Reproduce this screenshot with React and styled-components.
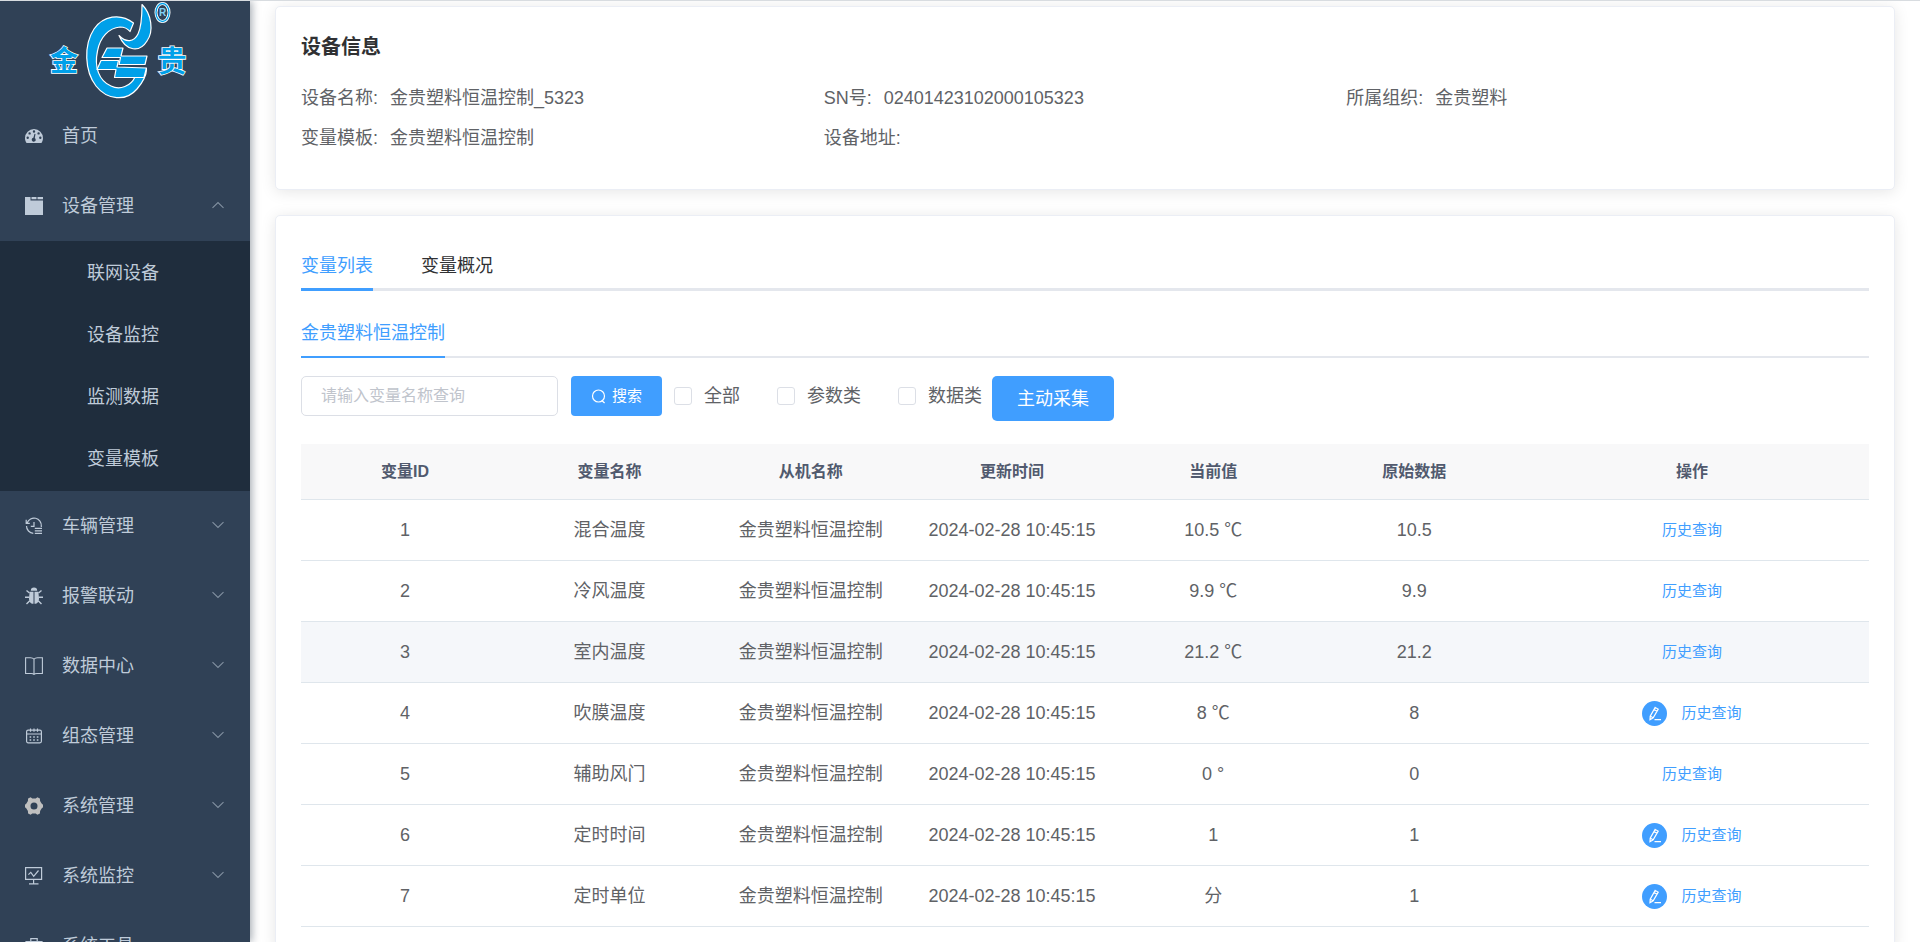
import React from "react";
import styled, { createGlobalStyle } from "styled-components";

const GlobalStyle = createGlobalStyle`
  *, *::before, *::after { box-sizing: border-box; }
  body {
    margin: 0;
    background: #fff;
    color: #606266;
    font-family: "Liberation Sans", "Noto Sans CJK SC", sans-serif;
    font-size: 18px;
    line-height: 24px;
  }
  button, input { font-family: inherit; line-height: inherit; }
  ul { list-style: none; margin: 0; padding: 0; }
`;

const Shell = styled.div`
  display: flex;
  height: 100vh;
  overflow: hidden;
  border-top: 1px solid #d8dce0;
`;

/* ---------- sidebar ---------- */

const Sidebar = styled.aside`
  flex: 0 0 250px;
  z-index: 1;
  overflow: hidden;
  background: #304156;
  box-shadow: 2px 0 8px rgba(0, 21, 41, 0.35);
`;

const LogoLink = styled.a`
  display: block;
  height: 100px;
  svg { display: block; }
`;

const itemLook = `
  display: flex;
  align-items: center;
  width: 100%;
  border: 0;
  background: none;
  color: #bfcbd9;
  font-size: 18px;
  text-align: left;
  text-decoration: none;
  cursor: pointer;
`;

const MenuLink = styled.a`
  ${itemLook}
  height: 70px;
  padding: 0 25px;
`;

const MenuButton = styled.button`
  ${itemLook}
  height: 70px;
  padding: 0 25px;
`;

const MenuIcon = styled.svg`
  flex: none;
  width: 18px;
  height: 18px;
  margin-right: 19px;
`;

const Arrow = styled.svg`
  width: 14px;
  height: 8px;
  margin-left: auto;
  margin-bottom: 2px;
  transform: ${(p) => (p.$open ? "rotate(180deg)" : "none")};
`;

const SubMenu = styled.ul`
  padding: 1px 0;
  background: #1f2d3d;
`;

const SubLink = styled.a`
  ${itemLook}
  height: 62px;
  padding-left: 87px;
`;

/* ---------- content ---------- */

const Main = styled.main`
  flex: 1;
  min-width: 0;
  display: flex;
  flex-direction: column;
  gap: 25px;
  padding: 5px 25px 25px;
`;

const Card = styled.section`
  flex: none;
  padding: 25px;
  border: 1px solid #ebeef5;
  border-radius: 5px;
  background: #fff;
  box-shadow: 0 2px 15px rgba(0, 0, 0, 0.1);
`;

const CardTitle = styled.h2`
  margin: 0 0 16px;
  color: #303133;
  font-size: 20px;
  line-height: 30px;
`;

const Details = styled.dl`
  display: grid;
  grid-template-columns: repeat(3, 1fr);
  margin: 0 0 6px;
  line-height: 40px;
`;

const Detail = styled.div`
  display: flex;
  gap: 12px;
  dd { margin: 0; }
`;

const Tabs = styled.div`
  display: flex;
  gap: 48px;
  margin-bottom: ${(p) => p.$gap}px;
  box-shadow: inset 0 -${(p) => p.$line}px 0 #e4e7ed;
`;

const Tab = styled.button`
  height: 50px;
  padding: 0;
  border: 0;
  background: none;
  color: ${(p) => (p.$active ? "#409eff" : "#303133")};
  font-size: 18px;
  box-shadow: ${(p) => (p.$active ? `inset 0 -${p.$line}px 0 #409eff` : "none")};
  cursor: pointer;
`;

const Toolbar = styled.form`
  display: flex;
  align-items: flex-start;
  margin-bottom: 23px;
`;

const SearchInput = styled.input`
  width: 257px;
  height: 40px;
  margin-right: 13px;
  padding: 0 19px;
  border: 1px solid #dcdfe6;
  border-radius: 5px;
  color: #606266;
  font-size: 16px;
  outline: none;
  &::placeholder { color: #c0c4cc; }
`;

const PrimaryButton = styled.button`
  display: flex;
  align-items: center;
  justify-content: center;
  gap: 6px;
  width: ${(p) => (p.$large ? 122 : 91)}px;
  height: ${(p) => (p.$large ? 45 : 40)}px;
  padding: 0;
  border: 0;
  border-radius: ${(p) => (p.$large ? 5 : 4)}px;
  background: #409eff;
  color: #fff;
  font-size: ${(p) => (p.$large ? 18 : 15)}px;
  cursor: pointer;
`;

const Checks = styled.div`
  display: flex;
  gap: 37px;
  margin: 0 10px 0 12px;
`;

const CheckLabel = styled.label`
  display: flex;
  align-items: center;
  gap: 12px;
  height: 40px;
`;

const CheckBox = styled.input`
  appearance: none;
  width: 18px;
  height: 18px;
  margin: 0;
  border: 1px solid #dcdfe6;
  border-radius: 3px;
  background: #fff;
  &:checked { background: #409eff; border-color: #409eff; }
`;

const Table = styled.table`
  width: 100%;
  table-layout: fixed;
  border-collapse: separate;
  border-spacing: 0;
  text-align: center;
`;

const Col = styled.col`
  width: ${(p) => p.$w || "auto"};
`;

const Th = styled.th`
  height: 56px;
  padding: 0;
  border-bottom: 1px solid #dfe6ec;
  background: #f8f8f9;
  color: #515a6e;
  font-size: 16px;
`;

const Row = styled.tr`
  background: ${(p) => (p.$hovered ? "#f5f7fa" : "#fff")};
`;

const Td = styled.td`
  height: 61px;
  padding: 0;
  border-bottom: 1px solid #dfe6ec;
`;

const Actions = styled.div`
  display: flex;
  align-items: center;
  justify-content: center;
  gap: 14px;
`;

const EditButton = styled.button`
  display: flex;
  align-items: center;
  justify-content: center;
  width: 25px;
  height: 25px;
  padding: 0;
  border: 0;
  border-radius: 50%;
  background: #409eff;
  cursor: pointer;
`;

const HistoryLink = styled.a`
  color: #409eff;
  font-size: 15px;
  text-decoration: none;
`;

/* ---------- drawings ---------- */

const Logo = () => (
  <svg width="250" height="100" viewBox="0 1 250 100" role="img" aria-label="金贵">
    <g fill="#00a0e9" stroke="#fff" strokeWidth="1.2" strokeLinejoin="round">
      <path d="M133.500 23 C120 12.500 103 16 94 29 C83.500 45 84.500 71 96 86 C107 100 126 102 137 89 C143 82 146.500 76 146.500 69 L120 69 L119 77 L135 77 C131 86 120 90.500 111 86 C99 81 94 67 97.500 51 C100 37 109 28 120 27 C125 27 128 29 130 31.500 Z" />
      <path d="M142 4.500 C151.500 14 154 31 147 41 C140 52.500 126 52 119 35.500 C126 43 134 42 138 34 C141.500 27 142 17 142 4.500 Z" />
      <path d="M107 48 L123 48 L121 56 L147 56 L145 64.500 L119 64.500 L120.500 57.500 L102 57.500 Z" />
      <path d="M101 60.500 L118.500 60.500 L117 67 L146.500 68 L144 77.500 L114.500 77.500 L116 69.500 L97 69.500 Z" />
      <ellipse cx="162.500" cy="12.500" rx="6.500" ry="9" fill="none" strokeWidth="3" />
      <ellipse cx="162.500" cy="12.500" rx="6.500" ry="9" fill="none" stroke="#00a0e9" strokeWidth="1.300" />
    </g>
    <g
      fill="#00a0e9"
      stroke="#fff"
      strokeWidth="1.600"
      paintOrder="stroke"
      fontFamily='"Noto Sans CJK SC", sans-serif'
      fontWeight="700"
      textAnchor="middle"
    >
      <text x="64" y="71" fontSize="28">金</text>
      <text x="172" y="72" fontSize="29">贵</text>
      <text
        x="162.500"
        y="16"
        fontSize="10"
        fill="#7fd0f5"
        stroke="none"
        fontFamily='"Liberation Sans", sans-serif'
      >
        R
      </text>
    </g>
  </svg>
);

const glyphs = {
  dashboard: (
    <path
      fill="currentColor"
      fillRule="evenodd"
      d="M9 2a9 9 0 0 0-9 9c0 2 .6 3.700 1.600 5h14.800c1-1.300 1.600-3 1.600-5a9 9 0 0 0-9-9zM9 3.300a1.200 1.200 0 1 1 0 2.400 1.200 1.200 0 0 1 0-2.400zM4.600 5.200a1.200 1.200 0 1 1 0 2.400 1.200 1.200 0 0 1 0-2.400zM13.600 5.200a1.200 1.200 0 1 1 0 2.400 1.200 1.200 0 0 1 0-2.400zM2.700 9.600a1.200 1.200 0 1 1 0 2.400 1.200 1.200 0 0 1 0-2.400zM15.300 9.600a1.200 1.200 0 1 1 0 2.400 1.200 1.200 0 0 1 0-2.400zM9.500 6.800l1 .3-.7 4a2 2 0 1 1-1.400-.3z"
    />
  ),
  device: (
    <g fill="currentColor">
      <path d="M0 0h5.500v3.500H18V18H0z" />
      <path d="M6.500 0h5v2.300h-5zM12.500 0H18v2.300h-5.500z" />
    </g>
  ),
  history: (
    <g fill="none" stroke="currentColor" strokeWidth="1.200">
      <path d="M2.200 5.800A7.300 7.300 0 0 1 16.300 9v1M1.500 9a7.300 7.300 0 0 0 6.800 7.300M1.200 2.800v3.600h3.600" />
      <path d="M9 5v4.300H5.800M9.800 11.300H17M9.800 13.800H17M9.800 16.300H17" />
    </g>
  ),
  bug: (
    <g fill="currentColor">
      <path d="M5.800 3.800a3.200 3.200 0 0 1 6.400 0zM4.600 4.800h3.900v12c-3 0-4.500-2.300-4.500-5.300zM13.400 4.800H9.500v12c3 0 4.500-2.300 4.500-5.300z" />
      <path
        fill="none"
        stroke="currentColor"
        strokeWidth="1.400"
        d="M1.500 3.500l3 2.500M16.500 3.500l-3 2.500M0 10.200h4.300M18 10.200h-4.300M1.500 17l3.300-3.300M16.500 17l-3.300-3.300"
      />
    </g>
  ),
  book: (
    <path
      fill="none"
      stroke="currentColor"
      strokeWidth="1.100"
      d="M9 2.200C8 1 7 .7 5.500.7H.6v15.800h5.600c1.400 0 2.300.3 2.800 1 .5-.7 1.400-1 2.800-1h5.600V.7h-4.900C11 .7 10 1 9 2.200zM9 2.200v15"
    />
  ),
  calendar: (
    <g fill="none" stroke="currentColor" strokeWidth="1.200">
      <rect x="1.600" y="3.200" width="14.800" height="12.600" rx="1.500" />
      <path d="M1.600 7h14.800M5.500 1.500v3.300M9 1.500v3.300M12.500 1.500v3.300" />
      <path strokeDasharray="1.600 2" d="M4.600 10h9M4.600 13h9" strokeWidth="1.600" />
    </g>
  ),
  gear: (
    <path
      fill="#bfbfbf"
      fillRule="evenodd"
      d="M5.600.3l1.700 1.200h3.400L12.400.3l2.500 1.300.2 2.300 1.500 2.500L18 7.700v2.600l-1.400 1.300-1.500 2.500-.2 2.300-2.500 1.300-1.700-1.200H7.300l-1.700 1.200-2.500-1.300-.2-2.300-1.500-2.500L0 10.300V7.700l1.400-1.300 1.500-2.500.2-2.300zM9 5.500a3.500 3.500 0 1 0 0 7 3.500 3.500 0 0 0 0-7z"
    />
  ),
  monitor: (
    <g fill="none" stroke="currentColor" strokeWidth="1.200">
      <path d="M.6.700h16v11.600H.6zM8.600 12.300v4M4 16.800h9.500" />
      <path d="M3.400 7.600l2.400-2.200 2.900 3.900 4.800-5.800" />
    </g>
  ),
  toolbox: (
    <g fill="none" stroke="currentColor" strokeWidth="1.200">
      <path d="M1 4.500h16v12H1zM5.800 4.500V1.700h6.400v2.800M1 9.500h6M11 9.500h6M7 8h4v3H7z" />
    </g>
  ),
};

const Icon = ({ name }) => (
  <MenuIcon viewBox="0 0 18 18" aria-hidden="true">
    {glyphs[name]}
  </MenuIcon>
);

const Chevron = ({ open }) => (
  <Arrow $open={open} viewBox="0 0 14 8" aria-hidden="true">
    <path d="M1.500 1.200L7 6.500l5.500-5.300" fill="none" stroke="#8291a1" strokeWidth="1.100" />
  </Arrow>
);

const SearchIcon = () => (
  <svg width="15" height="15" viewBox="0 0 15 15" fill="none" stroke="#fff" strokeWidth="1.200" aria-hidden="true">
    <circle cx="7.500" cy="7" r="6" />
    <path d="M10.800 11.500l2.800 2.500" />
  </svg>
);

const PencilIcon = () => (
  <svg width="15" height="15" viewBox="0 0 15 15" fill="none" stroke="#fff" strokeWidth="1.200" aria-hidden="true">
    <path d="M8.200 1.400l3 1.700-5 8.700-3.200 1.900.2-3.600zM7 3.600l3 1.700M3.400 10.200l2.700 1.500M7.500 13.600H14" />
  </svg>
);

/* ---------- data ---------- */

const menu = [
  { icon: "dashboard", label: "首页" },
  { icon: "device", label: "设备管理", children: ["联网设备", "设备监控", "监测数据", "变量模板"] },
  { icon: "history", label: "车辆管理", children: [] },
  { icon: "bug", label: "报警联动", children: [] },
  { icon: "book", label: "数据中心", children: [] },
  { icon: "calendar", label: "组态管理", children: [] },
  { icon: "gear", label: "系统管理", children: [] },
  { icon: "monitor", label: "系统监控", children: [] },
  { icon: "toolbox", label: "系统工具", children: [] },
];

const details = [
  ["设备名称:", "金贵塑料恒温控制_5323"],
  ["SN号:", "02401423102000105323"],
  ["所属组织:", "金贵塑料"],
  ["变量模板:", "金贵塑料恒温控制"],
  ["设备地址:", ""],
];

const columns = ["变量ID", "变量名称", "从机名称", "更新时间", "当前值", "原始数据", "操作"];

const rows = [
  { id: 1, name: "混合温度", value: "10.5 ℃", raw: "10.5" },
  { id: 2, name: "冷风温度", value: "9.9 ℃", raw: "9.9" },
  { id: 3, name: "室内温度", value: "21.2 ℃", raw: "21.2", hovered: true },
  { id: 4, name: "吹膜温度", value: "8 ℃", raw: "8", editable: true },
  { id: 5, name: "辅助风门", value: "0 °", raw: "0" },
  { id: 6, name: "定时时间", value: "1", raw: "1", editable: true },
  { id: 7, name: "定时单位", value: "分", raw: "1", editable: true },
];

const MenuEntry = ({ icon, label, children: items }) => {
  if (!items) {
    return (
      <li>
        <MenuLink href="#home">
          <Icon name={icon} />
          {label}
        </MenuLink>
      </li>
    );
  }
  const open = items.length > 0;
  return (
    <li>
      <MenuButton type="button" aria-expanded={open}>
        <Icon name={icon} />
        {label}
        <Chevron open={open} />
      </MenuButton>
      {open && (
        <SubMenu>
          {items.map((text) => (
            <li key={text}>
              <SubLink href="#device">{text}</SubLink>
            </li>
          ))}
        </SubMenu>
      )}
    </li>
  );
};

export default function App() {
  return (
    <>
      <GlobalStyle />
      <Shell>
        <Sidebar>
          <LogoLink href="#home">
            <Logo />
          </LogoLink>
          <nav>
            <ul>
              {menu.map((entry) => (
                <MenuEntry key={entry.label} {...entry} />
              ))}
            </ul>
          </nav>
        </Sidebar>
        <Main>
          <Card>
            <CardTitle>设备信息</CardTitle>
            <Details>
              {details.map(([term, text]) => (
                <Detail key={term}>
                  <dt>{term}</dt>
                  <dd>{text}</dd>
                </Detail>
              ))}
            </Details>
          </Card>
          <Card>
            <Tabs role="tablist" $line={3} $gap={17}>
              <Tab type="button" role="tab" aria-selected="true" $active $line={3}>变量列表</Tab>
              <Tab type="button" role="tab" aria-selected="false" $line={3}>变量概况</Tab>
            </Tabs>
            <Tabs role="tablist" $line={2} $gap={18}>
              <Tab type="button" role="tab" aria-selected="true" $active $line={2}>金贵塑料恒温控制</Tab>
            </Tabs>
            <Toolbar onSubmit={(e) => e.preventDefault()}>
              <SearchInput type="text" aria-label="变量名称" placeholder="请输入变量名称查询" />
              <PrimaryButton type="submit">
                <SearchIcon />
                搜索
              </PrimaryButton>
              <Checks>
                {["全部", "参数类", "数据类"].map((text) => (
                  <CheckLabel key={text}>
                    <CheckBox type="checkbox" />
                    {text}
                  </CheckLabel>
                ))}
              </Checks>
              <PrimaryButton type="button" $large>主动采集</PrimaryButton>
            </Toolbar>
            <Table>
              <colgroup>
                {columns.map((name, i) => (
                  <Col key={name} $w={i === 0 ? "208px" : i === 6 ? "354px" : undefined} />
                ))}
              </colgroup>
              <thead>
                <tr>
                  {columns.map((name) => (
                    <Th key={name} scope="col">{name}</Th>
                  ))}
                </tr>
              </thead>
              <tbody>
                {rows.map((row) => (
                  <Row key={row.id} $hovered={row.hovered}>
                    <Td>{row.id}</Td>
                    <Td>{row.name}</Td>
                    <Td>金贵塑料恒温控制</Td>
                    <Td>2024-02-28 10:45:15</Td>
                    <Td>{row.value}</Td>
                    <Td>{row.raw}</Td>
                    <Td>
                      <Actions>
                        {row.editable && (
                          <EditButton type="button" aria-label="编辑">
                            <PencilIcon />
                          </EditButton>
                        )}
                        <HistoryLink href="#history">历史查询</HistoryLink>
                      </Actions>
                    </Td>
                  </Row>
                ))}
              </tbody>
            </Table>
          </Card>
        </Main>
      </Shell>
    </>
  );
}
